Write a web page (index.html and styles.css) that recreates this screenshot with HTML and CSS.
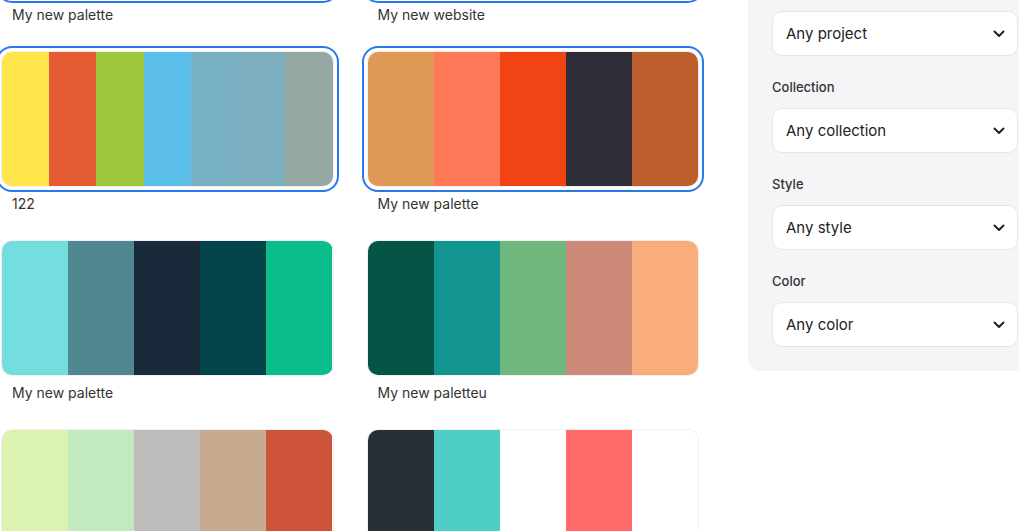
FILE: index.html
```html
<!DOCTYPE html>
<html lang="en">
<head>
<meta charset="UTF-8" />
<meta name="viewport" content="width=device-width, initial-scale=1" />
<title>Palettes</title>
<link rel="stylesheet" href="styles.css">
</head>
<body>

<div class="page">
  <div class="palettes">
    <div class="card">
      <div class="swatches selected">
        <span style="background:#f2c14e"></span>
        <span style="background:#f78154"></span>
        <span style="background:#4d9078"></span>
        <span style="background:#b4436c"></span>
        <span style="background:#5fad56"></span>
      </div>
      <div class="name">My new palette</div>
    </div>
    <div class="card">
      <div class="swatches selected">
        <span style="background:#22223b"></span>
        <span style="background:#4a4e69"></span>
        <span style="background:#9a8c98"></span>
        <span style="background:#c9ada7"></span>
        <span style="background:#f2e9e4"></span>
      </div>
      <div class="name">My new website</div>
    </div>

    <div class="card">
      <div class="swatches selected">
        <span style="background:#ffe54c"></span>
        <span style="background:#e35a33"></span>
        <span style="background:#9dc63c"></span>
        <span style="background:#5bbfea"></span>
        <span style="background:#78b1c2"></span>
        <span style="background:#7caebf"></span>
        <span style="background:#94a7a3"></span>
      </div>
      <div class="name">122</div>
    </div>
    <div class="card">
      <div class="swatches selected">
        <span style="background:#df9955"></span>
        <span style="background:#fd7957"></span>
        <span style="background:#f24314"></span>
        <span style="background:#2e2d38"></span>
        <span style="background:#bb5d2d"></span>
      </div>
      <div class="name">My new palette</div>
    </div>

    <div class="card">
      <div class="swatches">
        <span style="background:#74dede"></span>
        <span style="background:#4f8890"></span>
        <span style="background:#1a2a3a"></span>
        <span style="background:#02444a"></span>
        <span style="background:#0bbd8b"></span>
      </div>
      <div class="name">My new palette</div>
    </div>
    <div class="card">
      <div class="swatches">
        <span style="background:#065446"></span>
        <span style="background:#129490"></span>
        <span style="background:#70b77e"></span>
        <span style="background:#cd8a79"></span>
        <span style="background:#f9ad7a"></span>
      </div>
      <div class="name">My new paletteu</div>
    </div>

    <div class="card">
      <div class="swatches">
        <span style="background:#dcf2b0"></span>
        <span style="background:#c3e9bf"></span>
        <span style="background:#bebbbb"></span>
        <span style="background:#c7aa8f"></span>
        <span style="background:#ce5439"></span>
      </div>
      <div class="name">My new palette</div>
    </div>
    <div class="card">
      <div class="swatches">
        <span style="background:#292f36"></span>
        <span style="background:#4ecdc4"></span>
        <span style="background:#ffffff"></span>
        <span style="background:#ff6b6b"></span>
        <span style="background:#ffffff"></span>
      </div>
      <div class="name">Untitled</div>
    </div>
  </div>

  <aside class="filters">
    <div class="field">
      <label>Project</label>
      <div class="select">Any project <svg viewBox="0 0 12 8"><path d="M1.5 1.5 6 6l4.5-4.5" /></svg></div>
    </div>
    <div class="field">
      <label>Collection</label>
      <div class="select">Any collection <svg viewBox="0 0 12 8"><path d="M1.5 1.5 6 6l4.5-4.5" /></svg></div>
    </div>
    <div class="field">
      <label>Style</label>
      <div class="select">Any style <svg viewBox="0 0 12 8"><path d="M1.5 1.5 6 6l4.5-4.5" /></svg></div>
    </div>
    <div class="field">
      <label>Color</label>
      <div class="select">Any color <svg viewBox="0 0 12 8"><path d="M1.5 1.5 6 6l4.5-4.5" /></svg></div>
    </div>
  </aside>
</div>

</body>
</html>
```

FILE: styles.css
```css
html, body {
  margin: 0;
  overflow: hidden;
}
body {
  font-family: Inter, 'Noto Sans', sans-serif;
  color: #222;
  background: #fff;
}
.page {
  display: flex;
  align-items: flex-start;
  gap: 50px;
  width: 1060px;
  padding-left: 2px;
  margin-top: -137px;
}
.palettes {
  flex: 0 0 696px;
  display: grid;
  grid-template-columns: 1fr 1fr;
  column-gap: 35px;
  row-gap: 26px;
}
.swatches {
  display: flex;
  height: 134px;
  border-radius: 10px;
  overflow: hidden;
  box-shadow: 0 0 0 1px #f1f1f3;
}
.swatches span { flex: 1; }
.swatches.selected {
  outline: 2px solid #2a78ec;
  outline-offset: 4px;
}
.name {
  padding: 6px 10px 0;
  font-size: 14px;
  line-height: 23px;
  color: #333;
}
.filters {
  flex: 0 0 294px;
  box-sizing: border-box;
  margin-top: 95px;
  padding: 24px;
  background: #f5f5f7;
  border-radius: 12px;
}
.field + .field { margin-top: 23px; }
.field label {
  display: block;
  font-size: 13px;
  font-weight: 500;
  line-height: 16px;
  margin-bottom: 13px;
  color: #333;
}
.select {
  display: flex;
  align-items: center;
  justify-content: space-between;
  height: 45px;
  box-sizing: border-box;
  padding: 0 12px 0 13px;
  background: #fff;
  border: 1px solid #e6e6ea;
  border-radius: 10px;
  font-size: 15px;
  color: #222;
}
.select svg {
  width: 12px;
  height: 8px;
  fill: none;
  stroke: #222;
  stroke-width: 2;
  stroke-linecap: round;
  stroke-linejoin: round;
}
```
